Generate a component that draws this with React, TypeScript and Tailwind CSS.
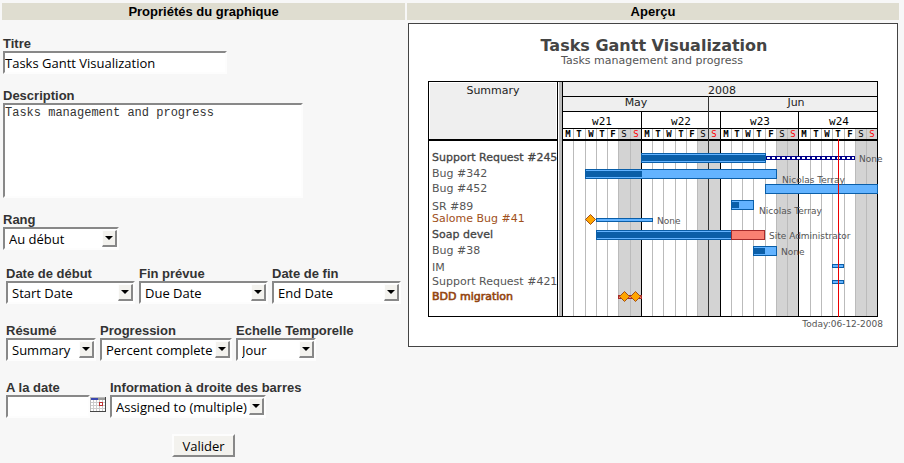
import React from "react";

const SANS = "font-['Liberation_Sans',Arial,sans-serif]";
const UI = "font-['Open_Sans',sans-serif]";
const INSET = "border-2 border-t-[#888] border-l-[#888] border-r-[#fdfdfd] border-b-[#fdfdfd] bg-white outline-none";

function Field({ id, label, children }: { id: string; label: string; children: React.ReactNode }) {
  return (
    <div className="flex flex-col items-start">
      <label htmlFor={id} className="whitespace-nowrap text-[13px] font-bold leading-[15px] text-[#333]">
        {label}
      </label>
      {children}
    </div>
  );
}

function Select({ id, options, className }: { id: string; options: string[]; className: string }) {
  return (
    <div className={`relative ${className}`}>
      <select id={id} className={`${UI} ${INSET} block h-[23px] w-full appearance-none pl-1 text-[13px] leading-[18px] text-black`}>
        {options.map((o) => (
          <option key={o}>{o}</option>
        ))}
      </select>
      <span className="pointer-events-none absolute inset-y-[3px] right-[2px] flex w-[15px] items-center justify-center border-t border-l border-r-2 border-b-2 border-t-[#fdfdfd] border-l-[#fdfdfd] border-r-[#888] border-b-[#888] bg-[#f3f2ee]">
        <svg width="8" height="4" viewBox="0 0 8 4" aria-hidden="true">
          <path d="M0 0H8L4 4Z" fill="#000" />
        </svg>
      </span>
    </div>
  );
}

function CalendarIcon() {
  return (
    <svg width="16" height="15" viewBox="0 0 16 15" shapeRendering="crispEdges" aria-hidden="true">
      <rect width="16" height="15" fill="#444" />
      <rect width="15" height="14" fill="#bbb" />
      <rect x="1" y="1" width="7" height="2" fill="#3a47b0" />
      <rect x="8" y="1" width="7" height="2" fill="#999" />
      <rect x="1" y="3" width="14" height="11" fill="#fff" />
      <path d="M3.5 3V14M6.5 3V14M9.5 3V14M12.5 3V14M1 5.5H15M1 8.5H15M1 11.5H15" stroke="#ccc" />
      <rect x="9.5" y="5.5" width="3" height="3" fill="#fff" stroke="#b33" />
    </svg>
  );
}

const DAYS = [
  562, 573, 585, 596, 607, 618, 630, 641, 652, 663, 675, 686, 697, 708, 720, 731, 742, 753, 765, 776, 787, 798, 810,
  821, 832, 844, 855, 866, 877,
];
const LETTERS = ["M", "T", "W", "T", "F", "S", "S"];

type Bar = { x: number; y: number; end: number; h: number; done?: number; late?: boolean };
const BARS: Bar[] = [
  { x: 641, y: 153, end: 766, h: 10, done: 765 },
  { x: 585, y: 169, end: 777, h: 10, done: 642 },
  { x: 765, y: 184, end: 878, h: 10 },
  { x: 731, y: 200, end: 754, h: 10, done: 739 },
  { x: 596, y: 218, end: 653, h: 4 },
  { x: 596, y: 230, end: 732, h: 10, done: 732 },
  { x: 731, y: 230, end: 765, h: 10, late: true },
  { x: 753, y: 246, end: 777, h: 10, done: 765 },
  { x: 832, y: 264, end: 844, h: 4 },
  { x: 832, y: 280, end: 844, h: 4 },
  { x: 618, y: 295, end: 642, h: 4, late: true },
];

type Task = { y: number; text: string; fill: string; weight?: number };
const TASKS: Task[] = [
  { y: 161, text: "Support Request #245", fill: "#444", weight: 0.3 },
  { y: 177, text: "Bug #342", fill: "#555" },
  { y: 192, text: "Bug #452", fill: "#555" },
  { y: 210, text: "SR #89", fill: "#555" },
  { y: 222, text: "Salome Bug #41", fill: "#a0501a" },
  { y: 238, text: "Soap devel", fill: "#444", weight: 0.3 },
  { y: 254, text: "Bug #38", fill: "#555" },
  { y: 271, text: "IM", fill: "#555" },
  { y: 285, text: "Support Request #421", fill: "#555" },
  { y: 300, text: "BDD migration", fill: "#934510", weight: 0.6 },
];

const NOTES = [
  { x: 859, y: 162, text: "None" },
  { x: 782, y: 183, text: "Nicolas Terray" },
  { x: 759, y: 214, text: "Nicolas Terray" },
  { x: 657, y: 224, text: "None" },
  { x: 769, y: 239, text: "Site Administrator" },
  { x: 781, y: 255, text: "None" },
];

function GanttChart() {
  return (
    <svg
      width="490"
      height="324"
      viewBox="408 23 490 324"
      role="img"
      aria-label="Tasks Gantt Visualization"
      className="block font-['DejaVu_Sans',sans-serif] text-[11px]"
      fill="#222"
    >
      <g shapeRendering="crispEdges">
        <rect x="408.5" y="23.5" width="489" height="323" fill="#fff" stroke="#444" />
        <rect x="430" y="83" width="126" height="56" fill="#efefef" />
        <rect x="563" y="82" width="314" height="29" fill="#efefef" />
        {[618, 697, 776, 855].map((x) => (
          <rect key={x} x={x} y="129" width="23" height="187" fill="#d3d3d3" />
        ))}
        {DAYS.map((x, i) => (i % 7 ? <rect key={x} x={x} y="129" width="1" height="187" fill="#bbb" /> : null))}
        <rect x="559" y="82" width="3" height="234" fill="#bbb" />
        <g fill="#000">
          <rect x="428" y="81" width="450" height="1" />
          <rect x="428" y="316" width="450" height="1" />
          <rect x="428" y="81" width="1" height="236" />
          <rect x="557" y="81" width="1" height="236" />
          <rect x="562" y="81" width="1" height="236" />
          <rect x="877" y="81" width="1" height="236" />
          <rect x="562" y="96" width="316" height="1" />
          <rect x="562" y="111" width="316" height="1" />
          <rect x="562" y="128" width="316" height="1" />
          <rect x="428" y="139" width="130" height="2" />
          <rect x="562" y="139" width="316" height="2" />
          {[641, 720, 798].map((x) => (
            <rect key={x} x={x} y="111" width="1" height="205" />
          ))}
        </g>
        <rect x="708" y="96" width="1" height="220" fill="#333" />
        {BARS.map((b) => (
          <g key={`${b.x}-${b.y}`}>
            <rect x={b.x} y={b.y} width={b.end - b.x} height={b.h} fill={b.late ? "#a52a2a" : "#0a5ea8"} />
            <rect x={b.x + 1} y={b.y + 1} width={b.end - b.x - 2} height={b.h - 2} fill={b.late ? "#fa8072" : "#63b3ff"} />
            {b.done && <rect x={b.x} y={b.y + 2} width={b.done - b.x} height={b.h - 4} fill="#0a5ea8" />}
          </g>
        ))}
        <rect x="766" y="156" width="89" height="4" fill="#00008b" />
        <path d="M767 158H854" stroke="#fff" strokeWidth="2" strokeDasharray="3 2" />
        <rect x="838" y="139" width="1" height="178" fill="#e00" />
      </g>

      {[
        [590.5, 219.5],
        [624.5, 296.5],
        [635.5, 296.5],
      ].map(([x, y]) => (
        <path key={x} d={`M${x} ${y - 5}l5 5l-5 5l-5-5z`} fill="#ffa500" stroke="#a0501a" />
      ))}

      <g textAnchor="middle">
        <text x="654" y="51" fill="#444" className="text-[16px] font-bold">
          Tasks Gantt Visualization
        </text>
        <text x="652" y="64" fill="#555">
          Tasks management and progress
        </text>
        <text x="493" y="94">Summary</text>
        <text x="722" y="94">2008</text>
        <text x="636" y="106">May</text>
        <text x="796" y="106">Jun</text>
        <g fill="#000" className="font-['DejaVu_Sans_Mono',monospace]">
          {["w21", "w22", "w23", "w24"].map((w, i) => (
            <text key={w} x={602 + i * 79} y="125">
              {w}
            </text>
          ))}
          <g className="text-[9px] font-bold">
            {DAYS.slice(0, 28).map((x, i) => (
              <text key={x} x={x + 6} y="137" fill={i % 7 === 6 ? "#f00" : "#000"} className={i % 7 > 4 ? "font-normal" : ""}>
                {LETTERS[i % 7]}
              </text>
            ))}
          </g>
        </g>
      </g>

      {TASKS.map((t) => (
        <text key={t.text} x="432" y={t.y} fill={t.fill} stroke={t.weight ? t.fill : "none"} strokeWidth={t.weight}>
          {t.text}
        </text>
      ))}
      <g fill="#555" className="text-[9px]">
        {NOTES.map((n) => (
          <text key={n.y} x={n.x} y={n.y}>
            {n.text}
          </text>
        ))}
        <text x="883" y="327" textAnchor="end">
          Today:06-12-2008
        </text>
      </g>
    </svg>
  );
}

function Heading({ children }: { children: React.ReactNode }) {
  return <h2 className="bg-[#dfddd0] text-center text-[13px] font-bold leading-[17px] text-black">{children}</h2>;
}

export default function App() {
  return (
    <main className={`flex min-h-screen items-start gap-[2px] bg-[#f7f7f7] pt-[3px] pr-[5px] pl-[2px] ${SANS}`}>
      <form className="min-w-0 flex-1" onSubmit={(e) => e.preventDefault()}>
        <Heading>Propriétés du graphique</Heading>
        <div className="flex flex-col gap-[14px] pt-4 pl-px">
          <Field id="title" label="Titre">
            <input
              id="title"
              defaultValue="Tasks Gantt Visualization"
              className={`${UI} ${INSET} h-[23px] w-56 text-[13px] text-black`}
            />
          </Field>
          <Field id="description" label="Description">
            <textarea
              id="description"
              defaultValue="Tasks management and progress"
              className={`${INSET} h-[95px] w-[300px] resize-none font-['Liberation_Mono',monospace] text-[12px] leading-4 text-[#333]`}
            />
          </Field>
          <Field id="rank" label="Rang">
            <Select id="rank" options={["Au début"]} className="w-[116px]" />
          </Field>
        </div>
        <div className="flex flex-col gap-[19px] pt-4 pl-1">
          <div className="flex gap-1">
            <Field id="start" label="Date de début">
              <Select id="start" options={["Start Date"]} className="w-[129px]" />
            </Field>
            <Field id="due" label="Fin prévue">
              <Select id="due" options={["Due Date"]} className="w-[129px]" />
            </Field>
            <Field id="end" label="Date de fin">
              <Select id="end" options={["End Date"]} className="w-[129px]" />
            </Field>
          </div>
          <div className="flex gap-1">
            <Field id="summary" label="Résumé">
              <Select id="summary" options={["Summary"]} className="w-[90px]" />
            </Field>
            <Field id="progress" label="Progression">
              <Select id="progress" options={["Percent complete"]} className="w-[132px]" />
            </Field>
            <Field id="scale" label="Echelle Temporelle">
              <Select id="scale" options={["Jour"]} className="w-20" />
            </Field>
          </div>
          <div className="flex gap-1">
            <Field id="date" label="A la date">
              <div className="flex items-start">
                <input id="date" className={`${UI} ${INSET} h-[23px] w-[84px] text-[13px] text-black`} />
                <button type="button" aria-label="Calendrier" className="pt-[2px]">
                  <CalendarIcon />
                </button>
              </div>
            </Field>
            <Field id="info" label="Information à droite des barres">
              <Select id="info" options={["Assigned to (multiple)"]} className="w-[156px]" />
            </Field>
          </div>
        </div>
        <div className="flex justify-center pt-4">
          <button
            type="submit"
            className={`${UI} h-[23px] border-2 border-t-[#fdfdfd] border-l-[#fdfdfd] border-r-[#888] border-b-[#888] bg-[#f3f2ee] px-2 text-[13px] leading-[18px] text-black`}
          >
            Valider
          </button>
        </div>
      </form>
      <section>
        <Heading>Aperçu</Heading>
        <div className="pt-[3px] pr-px pl-px">
          <GanttChart />
        </div>
      </section>
    </main>
  );
}
